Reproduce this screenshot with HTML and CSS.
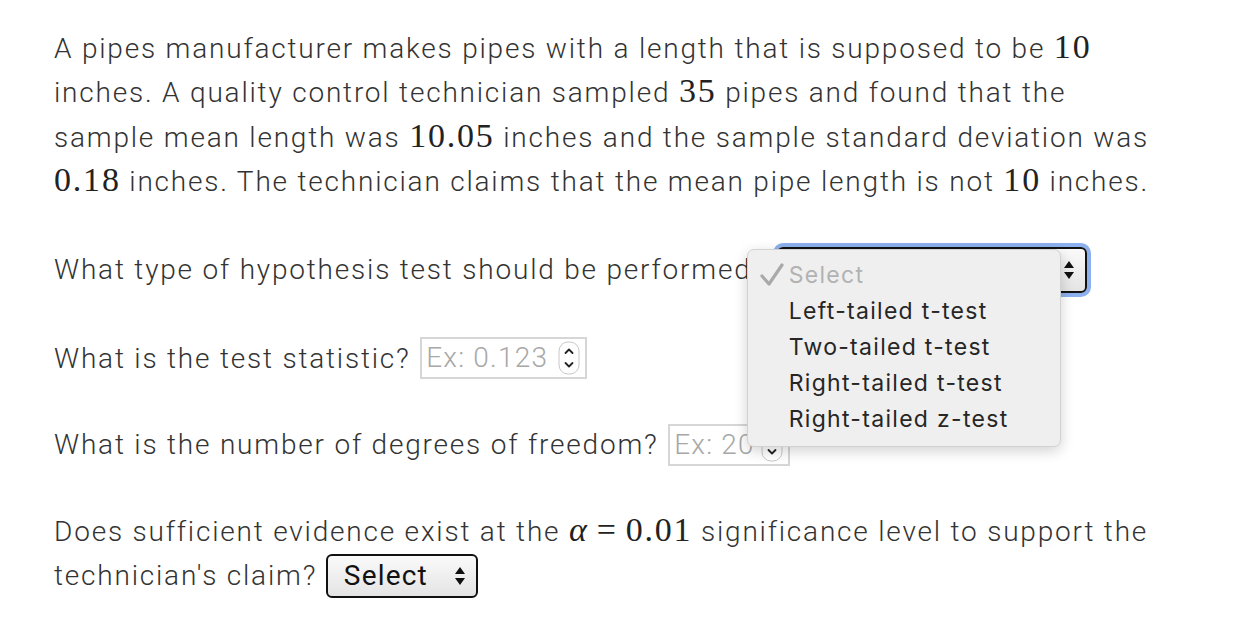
FILE: index.html
```html
<!DOCTYPE html>
<html>
<head>
<meta charset="utf-8">
<link rel="stylesheet" href="styles.css">
</head>
<body>
<div class="page">
  <p class="intro">A pipes manufacturer makes pipes with a length that is supposed to be <span class="m">10</span> inches. A quality control technician sampled <span class="m">35</span> pipes and found that the sample mean length was <span class="m">10.05</span> inches and the sample standard deviation was <span class="m">0.18</span> inches. The technician claims that the mean pipe length is not <span class="m">10</span> inches.</p>

  <div class="q first">What type of hypothesis test should be performed? <span class="sel-wrap"><span class="sel focus"><span class="sel-text">Select</span><svg class="arrows" viewBox="0 0 12 20" width="12" height="20"><path d="M6 1 L11 8 H1 Z M6 19 L11 12 H1 Z" fill="#111"/></svg></span><span class="popup"><span class="opt chosen"><svg class="check" viewBox="0 0 26 26" width="26" height="26"><path d="M3 14 L10 22 L23 3" fill="none" stroke="#a9a9a9" stroke-width="3.2" stroke-linecap="round" stroke-linejoin="round"/></svg>Select</span><span class="opt">Left-tailed t-test</span><span class="opt">Two-tailed t-test</span><span class="opt">Right-tailed t-test</span><span class="opt">Right-tailed z-test</span></span></span></div>

  <div class="q">What is the test statistic? <span class="num wide"><span class="ph">Ex: 0.123</span><svg class="spin" viewBox="0 0 22 34" width="22" height="34"><rect x="1" y="1" width="20" height="32" rx="9" fill="#fff" stroke="#c8c8c8"/><path d="M7.5 12 L11 8.5 L14.5 12 M7.5 22 L11 25.5 L14.5 22" fill="none" stroke="#222" stroke-width="1.8" stroke-linecap="round" stroke-linejoin="round"/></svg></span></div>

  <div class="q">What is the number of degrees of freedom? <span class="num narrow"><span class="ph">Ex: 20</span><svg class="spin" viewBox="0 0 22 34" width="22" height="34"><rect x="1" y="1" width="20" height="32" rx="9" fill="#fff" stroke="#c8c8c8"/><path d="M7.5 12 L11 8.5 L14.5 12 M7.5 22 L11 25.5 L14.5 22" fill="none" stroke="#222" stroke-width="1.8" stroke-linecap="round" stroke-linejoin="round"/></svg></span></div>

  <div class="q last">Does sufficient evidence exist at the <span class="m"><span class="mi">α</span><span class="rel">=</span>0.01</span> significance level to support the technician's claim? <span class="sel small"><span class="sel-text">Select</span><svg class="arrows" viewBox="0 0 12 20" width="12" height="20"><path d="M6 1 L11 8 H1 Z M6 19 L11 12 H1 Z" fill="#111"/></svg></span></div>
</div>
</body>
</html>
```

FILE: styles.css
```css
html, body {
  margin: 0;
  padding: 0;
  background: #fff;
}

.page {
  padding: 27px 0 0 54px;
  width: 1112px;
  font-family: "Roboto", "Liberation Sans", sans-serif;
  font-weight: 300;
  font-size: 28px;
  letter-spacing: 1.8px;
  line-height: 44.4px;
  color: #333;
}

.intro {
  margin: 0 0 43px 0;
}

.m {
  font-family: "Liberation Serif", "DejaVu Serif", serif;
  font-weight: 400;
  font-size: 34px;
  line-height: 0;
  color: #222;
}

.mi {
  font-style: italic;
}

.rel {
  margin: 0 8px;
}

.q {
  margin: 0 0 42px 0;
}

.q.first {
  margin-bottom: 44px;
}

.q.last {
  margin-bottom: 0;
}

.sel-wrap {
  position: relative;
  display: inline-block;
  vertical-align: middle;
  line-height: 0;
}

.sel {
  display: inline-flex;
  align-items: center;
  justify-content: space-between;
  box-sizing: border-box;
  border: 2px solid #111;
  border-radius: 6px;
  background: linear-gradient(#fafafa, #e4e4e4);
  font-weight: 400;
  color: #111;
  vertical-align: middle;
  letter-spacing: 1.2px;
}

.sel.focus {
  width: 310px;
  height: 46px;
  padding: 0 10px 0 14px;
  box-shadow: 0 0 0 4px #8db0ee;
  margin-left: 2px;
  margin-top: -3px;
}

.sel.small {
  width: 152px;
  height: 44px;
  padding: 0 10px 0 16px;
  margin-top: -4px;
}

.sel-text {
  line-height: 1;
}

.arrows {
  display: block;
}

.popup {
  position: absolute;
  left: -28px;
  top: -1px;
  width: 314px;
  box-sizing: border-box;
  padding: 7px 0 9px 0;
  background: #efefef;
  border: 1px solid #d2d2d2;
  border-radius: 7px;
  box-shadow: 0 4px 14px rgba(0, 0, 0, 0.18);
  display: flex;
  flex-direction: column;
  font-family: "Inter", "Liberation Sans", sans-serif;
  font-weight: 400;
  font-size: 23px;
  letter-spacing: 1.3px;
  line-height: 36px;
  color: #262626;
  z-index: 5;
}

.opt {
  position: relative;
  padding-left: 41px;
  white-space: nowrap;
}

.opt.chosen {
  color: #b2b2b2;
}

.check {
  position: absolute;
  left: 11px;
  top: 5px;
}

.num {
  display: inline-flex;
  align-items: center;
  justify-content: space-between;
  box-sizing: border-box;
  height: 42px;
  border: 2px solid #d6d6d6;
  padding: 0 5px 0 4px;
  vertical-align: middle;
  margin-top: -4px;
  margin-left: 1px;
  letter-spacing: 1.2px;
}

.num.wide {
  width: 167px;
}

.num.narrow {
  width: 122px;
}

.ph {
  color: #a8a8a8;
  line-height: 1;
  white-space: nowrap;
}

.spin {
  display: block;
  flex: none;
}
```
